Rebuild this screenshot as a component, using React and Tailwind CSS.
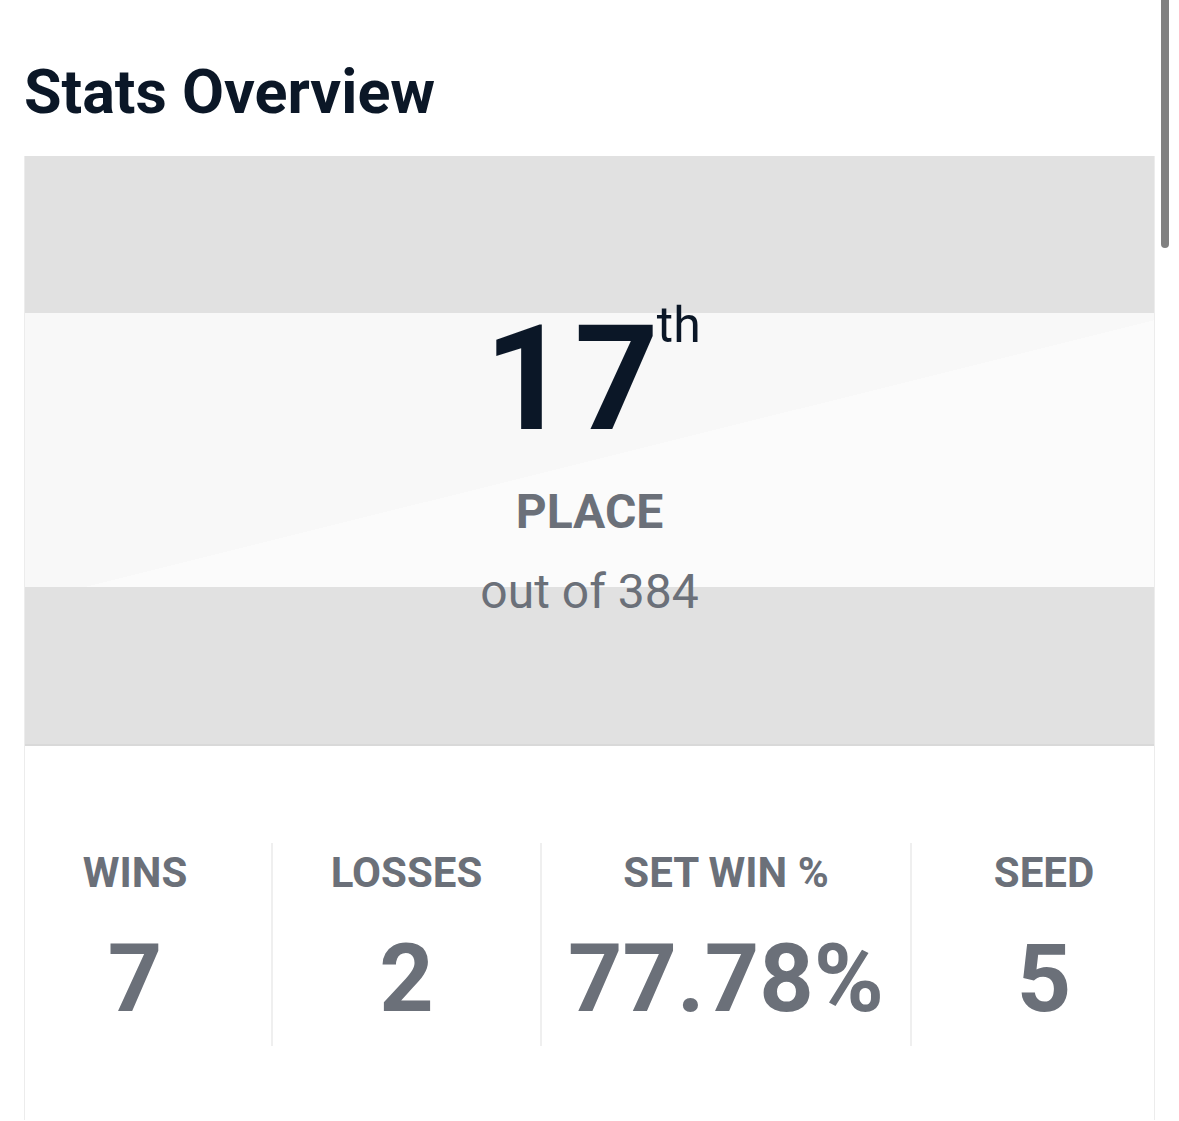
import React from 'react';

const stats = [
  { label: 'WINS', value: '7', cls: 'pr-[26px]' },
  { label: 'LOSSES', value: '2', cls: 'border-l-2 border-[#efefef]' },
  { label: 'SET WIN %', value: '77.78%', cls: 'border-l-2 border-[#efefef]' },
  { label: 'SEED', value: '5', cls: 'border-l-2 border-[#efefef] pl-[22px]' },
];

export default function App() {
  return (
    <div className="relative min-h-[1121px] bg-white px-6 font-['Roboto',sans-serif] overflow-hidden">
      {/* overlay scrollbar */}
      <div className="absolute right-[10px] top-0 h-[248px] w-[8px] rounded-b-full bg-[#808080]" />

      <h1 className="pt-[57px] text-[61px] font-bold leading-[70px] text-[#0b1727]">
        Stats Overview
      </h1>

      <div className="mt-[29px] border-x border-[#ececec]">
        {/* hero */}
        <div className="relative h-[590px] bg-[#e1e1e1] border-b-2 border-[#d9d9d9]">
          <div className="absolute inset-x-0 top-[157px] h-[274px] bg-[linear-gradient(166deg,#f8f8f8_52%,#fbfbfb_52%)]" />
          <div className="relative flex flex-col items-center pt-[148px]">
            <div className="relative mr-[42px] text-[147px] font-bold leading-[150px] text-[#0b1727]">
              <span className="tracking-[6px]">1</span>
              <span className="tracking-[-6px]">7</span>
              <sup className="absolute left-full top-[-4px] ml-[4px] text-[50px] font-normal leading-[50px]">th</sup>
            </div>
            <div className="mt-[30px] text-[48px] font-bold leading-[56px] text-[#6b7079]">PLACE</div>
            <div className="mt-[24px] text-[48px] leading-[56px] text-[#6b7079]">out of 384</div>
          </div>
        </div>

        {/* stats row */}
        <div className="grid grid-cols-[246px_269px_370px_1fr] pt-[97px] pb-[74px]">
          {stats.map((s) => (
            <div key={s.label} className={`flex flex-col items-center h-[203px] ${s.cls}`}>
              <div className="mt-[4px] text-[42px] font-bold leading-[52px] text-[#6b7079]">{s.label}</div>
              <div className="mt-[30px] text-[95px] font-bold leading-[100px] text-[#6b7079]">{s.value}</div>
            </div>
          ))}
        </div>
      </div>
    </div>
  );
}
